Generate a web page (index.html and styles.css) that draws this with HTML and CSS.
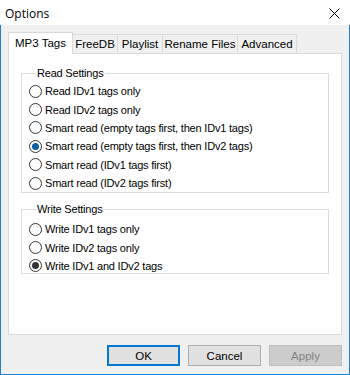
FILE: index.html
```html
<!DOCTYPE html>
<html lang="en">
<head>
    <meta charset="UTF-8">
    <title>Options</title>
    <link rel="stylesheet" href="styles.css">
</head>
<body>
    <div class="window">
        <!-- Заголовок окна -->
        <div class="titlebar">
            <span class="title">Options</span>
            <svg class="close" width="11" height="11" viewBox="0 0 11 11">
                <path d="M0.5 0.5 L10.5 10.5 M10.5 0.5 L0.5 10.5" stroke="#000" stroke-width="1" fill="none"/>
            </svg>
        </div>

        <div class="client">
            <!-- Вкладки -->
            <div class="tabs">
                <div class="tab active tab-mp3">MP3 Tags</div>
                <div class="tab tab-freedb">FreeDB</div>
                <div class="tab tab-playlist">Playlist</div>
                <div class="tab tab-rename">Rename Files</div>
                <div class="tab tab-advanced">Advanced</div>
            </div>

            <div class="panel">
                <fieldset class="group group-read">
                    <legend>Read Settings</legend>
                    <div class="option"><span class="radio"></span>Read IDv1 tags only</div>
                    <div class="option"><span class="radio"></span>Read IDv2 tags only</div>
                    <div class="option"><span class="radio"></span>Smart read (empty tags first, then IDv1 tags)</div>
                    <div class="option"><span class="radio checked focus"></span>Smart read (empty tags first, then IDv2 tags)</div>
                    <div class="option"><span class="radio"></span>Smart read (IDv1 tags first)</div>
                    <div class="option"><span class="radio"></span>Smart read (IDv2 tags first)</div>
                </fieldset>

                <fieldset class="group group-write">
                    <legend>Write Settings</legend>
                    <div class="option"><span class="radio"></span>Write IDv1 tags only</div>
                    <div class="option"><span class="radio"></span>Write IDv2 tags only</div>
                    <div class="option"><span class="radio checked"></span>Write IDv1 and IDv2 tags</div>
                </fieldset>
            </div>

            <!-- Кнопки -->
            <div class="buttons">
                <button class="button button-default">OK</button>
                <button class="button">Cancel</button>
                <button class="button button-disabled">Apply</button>
            </div>
        </div>
    </div>
</body>
</html>
```

FILE: styles.css
```css
* {
    margin: 0;
    padding: 0;
    box-sizing: border-box;
}

body {
    font-family: 'Liberation Sans', Arial, sans-serif;
    font-size: 11px;
    letter-spacing: -0.2px;
    color: #000;
    background: #fff;
}

.window {
    width: 350px;
    height: 375px;
    display: flex;
    flex-direction: column;
}

/* Заголовок */
.titlebar {
    height: 25px;
    background: #fff;
    display: flex;
    align-items: center;
    justify-content: space-between;
    padding: 0 10px 0 5px;
}

.title {
    font-family: 'Open Sans', 'Noto Sans', sans-serif;
    font-size: 12px;
    letter-spacing: 0;
    margin-top: 1px;
}

.close {
    margin-top: 1px;
}

.client {
    flex: 1;
    background: #f0f0f0;
    border: 1px solid #1883d7;
    border-top: none;
    padding: 6px 7px 0 7px;
}

/* Вкладки */
.tabs {
    display: flex;
    align-items: flex-end;
    height: 22px;
}

.tab {
    height: 19px;
    line-height: 18px;
    text-align: center;
    border: 1px solid #d9d9d9;
    border-bottom: none;
    border-left: none;
    background: #f0f0f0;
    font-size: 11.5px;
    letter-spacing: 0;
}

.tab.active {
    height: 22px;
    line-height: 21px;
    background: #fff;
    border-left: 1px solid #d9d9d9;
    margin-bottom: -1px;
    position: relative;
    z-index: 1;
}

.tab-mp3 { width: 65px; }
.tab-freedb { width: 45px; }
.tab-playlist { width: 45px; }
.tab-rename { width: 75px; }
.tab-advanced { width: 59px; }

.panel {
    height: 282px;
    background: #fff;
    border: 1px solid #d9d9d9;
    padding: 13px 12px 0 12px;
}

/* Группы */
.group {
    border: 1px solid #dcdcdc;
    padding: 0 0 0 7px;
}

.group legend {
    margin-left: 7px;
    padding: 0 1px;
    line-height: 13px;
}

.group-read {
    height: 126px;
    padding-top: 2px;
}

.group-write {
    margin-top: 10px;
    height: 71px;
    padding-top: 4px;
}

.option {
    height: 18.4px;
    display: flex;
    align-items: center;
    white-space: nowrap;
}

.radio {
    width: 13px;
    height: 13px;
    border: 1px solid #333;
    border-radius: 50%;
    background: #fff;
    margin-right: 3px;
    flex-shrink: 0;
    display: flex;
    align-items: center;
    justify-content: center;
}

.radio.checked::after {
    content: '';
    width: 7px;
    height: 7px;
    border-radius: 50%;
    background: #333;
}

.radio.focus::after {
    background: #0d5fa8;
}

/* Кнопки */
.buttons {
    display: flex;
    justify-content: flex-end;
    gap: 8px;
    margin-top: 10px;
}

.button {
    width: 73px;
    height: 21px;
    font-family: 'Liberation Sans', Arial, sans-serif;
    font-size: 11.5px;
    background: #e1e1e1;
    border: 1px solid #adadad;
    color: #000;
}

.button-default {
    border: 2px solid #0078d7;
}

.button-disabled {
    background: #cccccc;
    border-color: #bfbfbf;
    color: #838383;
}
```
